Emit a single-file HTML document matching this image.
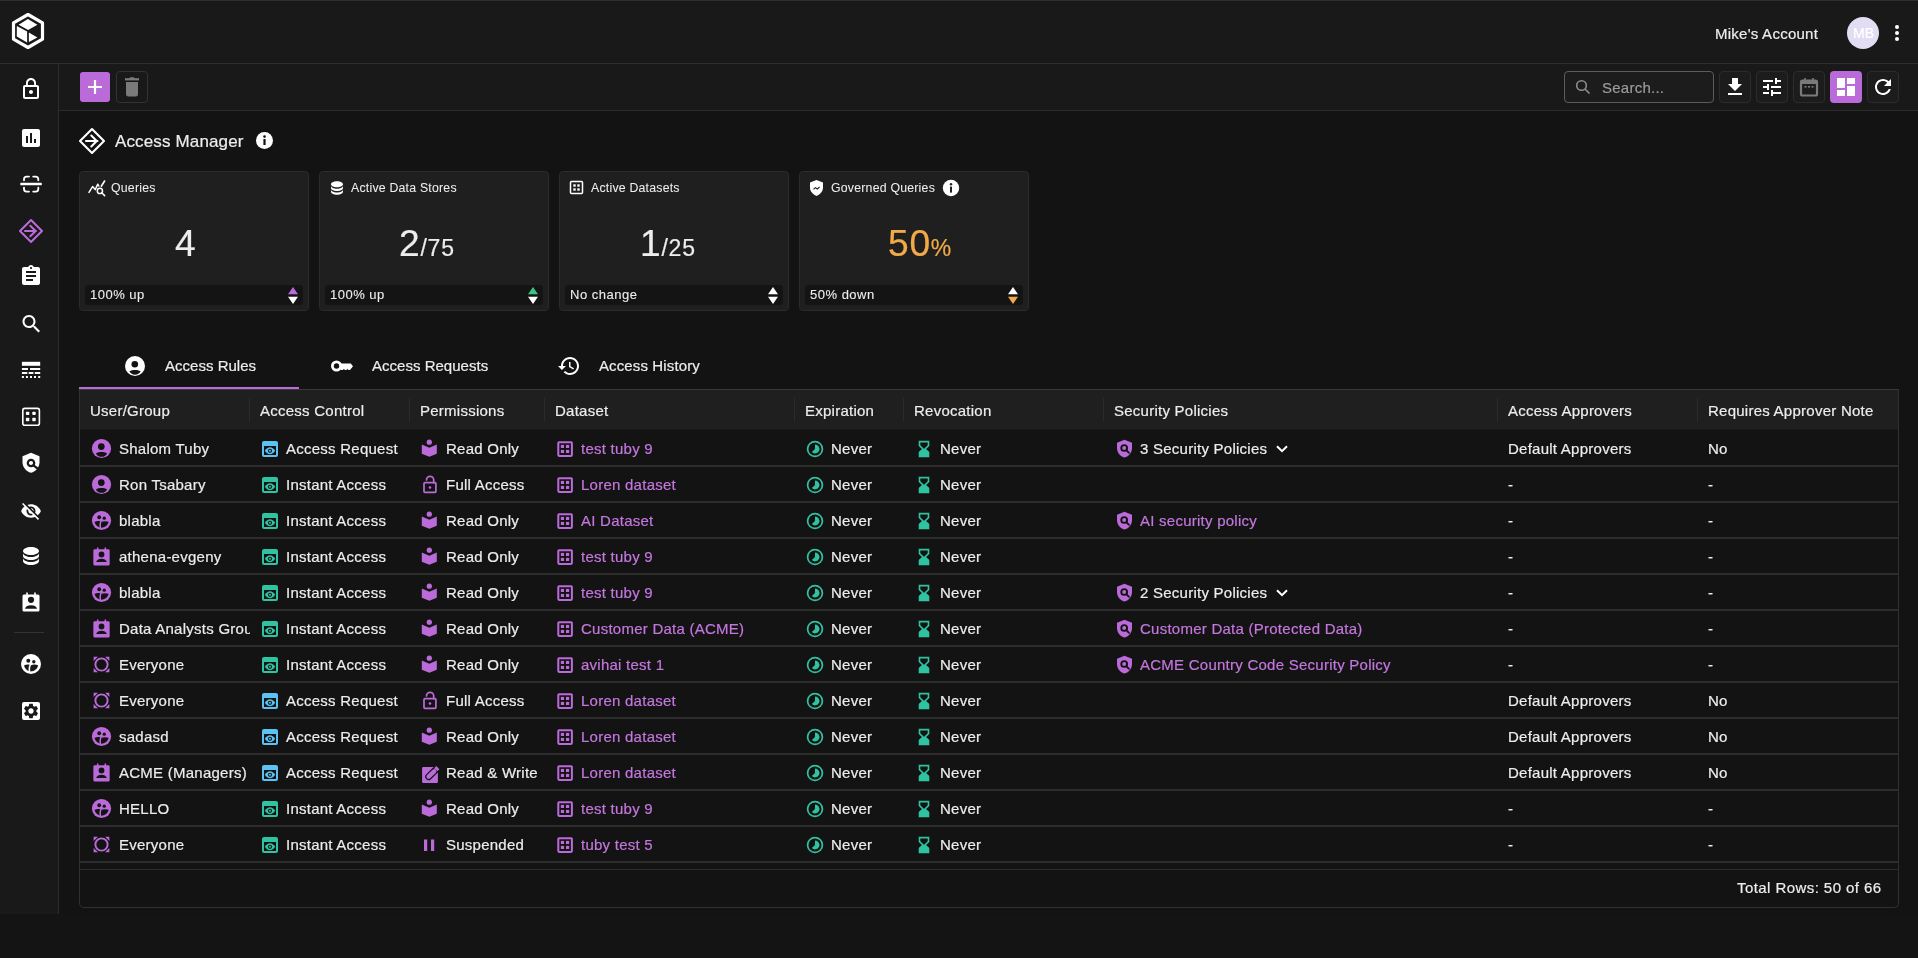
<!DOCTYPE html>
<html><head><meta charset="utf-8">
<style>
*{box-sizing:border-box;margin:0;padding:0}
html,body{width:1918px;height:958px;overflow:hidden;background:#141414;font-family:"Liberation Sans",sans-serif;color:#ececec}
.abs{position:absolute}
svg{display:block;overflow:visible}
#hdr{left:0;top:0;width:1918px;height:64px;background:#191919;border-top:1px solid #2e2e2e;border-bottom:1px solid #2e2e2e}
#side{left:0;top:64px;width:59px;height:850px;background:#191919;border-right:1px solid #2c2c2c}
#tb{left:59px;top:64px;width:1859px;height:47px;background:#191919;border-bottom:1px solid #2c2c2c}
#main{left:59px;top:111px;width:1859px;height:803px;background:#131313}
.t{position:absolute;white-space:nowrap;font-family:"Liberation Sans",sans-serif;-webkit-font-smoothing:antialiased;will-change:transform;-webkit-text-stroke:0.2px currentColor}
.card{position:absolute;top:171px;width:230px;height:140px;background:#1f1f1f;border:1px solid #2b2b2b;border-radius:4px}
</style></head><body>
<div id="hdr" class="abs"></div>
<svg class="abs" style="left:0px;top:0px" width="60" height="60" viewBox="0 0 60 60"><path d="M28 14.5 L42.5 22.8 V39.2 L28 47.5 L13.5 39.2 V22.8 Z" fill="none" stroke="#fff" stroke-width="3.2" stroke-linejoin="round"/><path d="M18.6 24.7 L27.9 18.9 L37.4 24.7 L28.1 30 Z" fill="#fff"/><path d="M16.8 25.9 L27.1 31.6 V42.4 L16.8 36.6 Z" fill="#fff"/><path d="M28.9 32.6 L37.4 37.4 L28.9 41.9 Z" fill="#fff"/></svg>
<div class="t" style="left:1715px;top:25.40px;font-size:15px;line-height:18px;letter-spacing:0.25px;color:#ededed">Mike's Account</div>
<div class="abs" style="left:1847px;top:17px;width:32px;height:32px;border-radius:50%;background:#e2ddf3"></div>
<div class="t" style="left:1853px;top:24.85px;font-size:14px;line-height:17px;letter-spacing:0.2px;color:#ffffff">MB</div>
<svg class="abs" style="left:1889px;top:21px" width="16" height="24" viewBox="0 0 16 24"><circle cx="8" cy="6" r="2" fill="#fff"/><circle cx="8" cy="12" r="2" fill="#fff"/><circle cx="8" cy="18" r="2" fill="#fff"/></svg>
<div id="side" class="abs"></div>
<svg class="abs" style="left:19px;top:77px" width="24" height="24" viewBox="0 0 24 24"><path fill="#fff" d="M12 17c1.1 0 2-.9 2-2s-.9-2-2-2-2 .9-2 2 .9 2 2 2zm6-9h-1V6c0-2.76-2.24-5-5-5S7 3.24 7 6v2H6c-1.1 0-2 .9-2 2v10c0 1.1.9 2 2 2h12c1.1 0 2-.9 2-2V10c0-1.1-.9-2-2-2zM8.9 6c0-1.71 1.39-3.1 3.1-3.1s3.1 1.39 3.1 3.1v2H8.9V6zM18 20H6V10h12v10z"/></svg>
<svg class="abs" style="left:19px;top:126px" width="24" height="24" viewBox="0 0 24 24"><path fill="#fff" d="M19 3H5c-1.1 0-2 .9-2 2v14c0 1.1.9 2 2 2h14c1.1 0 2-.9 2-2V5c0-1.1-.9-2-2-2zM9 17H7v-7h2v7zm4 0h-2V7h2v10zm4 0h-2v-4h2v4z"/></svg>
<svg class="abs" style="left:19px;top:172px" width="24" height="24" viewBox="0 0 24 24"><g fill="none" stroke="#fff" stroke-width="1.8" stroke-linecap="round"><path d="M5 8.3V7.2Q5 4.6 7.6 4.6H10M14.2 4.6H16.6Q19.3 4.6 19.3 7.2V8.3M5 15.6V17Q5 19.6 7.6 19.6H10M14.2 19.6H16.6Q19.3 19.6 19.3 17V15.6"/></g><rect x="1.3" y="10.8" width="21.5" height="2.5" rx="0.6" fill="#fff"/></svg>
<svg class="abs" style="left:19px;top:219px" width="24" height="24" viewBox="0 0 24 24"><g fill="none" stroke="#bb6bd9" stroke-width="2"><path d="M12 1 L23 12 L12 23 L1 12 Z" stroke-linejoin="round"/><path d="M6 12h11M11.3 6.7 L16.6 12 L11.3 17.3" stroke-linecap="round" stroke-linejoin="round"/></g></svg>
<svg class="abs" style="left:19px;top:264px" width="24" height="24" viewBox="0 0 24 24"><path fill="#fff" d="M19 3h-4.18C14.4 1.84 13.3 1 12 1c-1.3 0-2.4.84-2.82 2H5c-1.1 0-2 .9-2 2v14c0 1.1.9 2 2 2h14c1.1 0 2-.9 2-2V5c0-1.1-.9-2-2-2zm-7 0c.55 0 1 .45 1 1s-.45 1-1 1-1-.45-1-1 .45-1 1-1zm2 14H7v-2h7v2zm3-4H7v-2h10v2zm0-4H7V7h10v2z"/></svg>
<svg class="abs" style="left:19px;top:311px" width="24" height="24" viewBox="0 0 24 24"><path fill="#fff" d="M15.5 14h-.79l-.28-.27C15.41 12.59 16 11.11 16 9.5 16 5.91 13.09 3 9.5 3S3 5.91 3 9.5 5.91 16 9.5 16c1.61 0 3.09-.59 4.23-1.57l.27.28v.79l5 4.99L20.49 19l-4.99-5zm-6 0C7.01 14 5 11.99 5 9.5S7.01 5 9.5 5 14 7.01 14 9.5 11.99 14 9.5 14z" transform="translate(0.5,1)"/></svg>
<svg class="abs" style="left:19px;top:358px" width="24" height="24" viewBox="0 0 24 24"><g fill="#fff"><rect x="2.9" y="3.8" width="18.3" height="4"/><rect x="2.9" y="10" width="6.1" height="2"/><rect x="11" y="10" width="10.2" height="2"/><rect x="2.9" y="14" width="5.4" height="2"/><rect x="9.7" y="14" width="4.7" height="2"/><rect x="15.8" y="14" width="5.4" height="2"/><rect x="2.9" y="18" width="2" height="2"/><rect x="6.9" y="18" width="2" height="2"/><rect x="11" y="18" width="2" height="2"/><rect x="15" y="18" width="2" height="2"/><rect x="19.2" y="18" width="2" height="2"/></g></svg>
<svg class="abs" style="left:19px;top:405px" width="24" height="24" viewBox="0 0 24 24"><rect x="3.8" y="3.4" width="16.6" height="16.8" rx="2" fill="none" stroke="#fff" stroke-width="1.6"/><g fill="#fff"><rect x="6.9" y="6.7" width="3.4" height="3.4" rx="0.8"/><rect x="13.3" y="6.7" width="3.4" height="3.4" rx="0.8"/><rect x="6.9" y="12.8" width="3.4" height="3.4" rx="0.8"/><rect x="13.3" y="12.8" width="3.4" height="3.4" rx="0.8"/></g></svg>
<svg class="abs" style="left:19px;top:451px" width="24" height="24" viewBox="0 0 24 24"><path fill="#fff" d="M12 1.7 L20.5 5.3 V11 C20.5 16.2 16.9 20.5 12 21.8 C7.1 20.5 3.5 16.2 3.5 11 V5.3 Z"/><circle cx="12" cy="12" r="3.2" fill="none" stroke="#191919" stroke-width="2.2"/><path d="M14.4 14.4 L18.8 17.6" stroke="#191919" stroke-width="2.4" stroke-linecap="round"/></svg>
<svg class="abs" style="left:19px;top:499px" width="24" height="24" viewBox="0 0 24 24"><path transform="translate(12 12) scale(0.9) translate(-12 -12)" fill="#fff" d="M12 7c2.76 0 5 2.24 5 5 0 .65-.13 1.26-.36 1.83l2.92 2.92c1.51-1.26 2.7-2.89 3.43-4.75-1.73-4.39-6-7.5-11-7.5-1.4 0-2.74.25-3.98.7l2.16 2.16C10.74 7.13 11.35 7 12 7zM2 4.27l2.28 2.28.46.46C3.08 8.3 1.78 10.02 1 12c1.73 4.39 6 7.5 11 7.5 1.55 0 3.03-.3 4.38-.84l.42.42L19.73 22 21 20.73 3.27 3 2 4.27zM7.53 9.8l1.55 1.55c-.05.21-.08.43-.08.65 0 1.66 1.34 3 3 3 .22 0 .44-.03.65-.08l1.55 1.55c-.67.33-1.41.53-2.2.53-2.76 0-5-2.24-5-5 0-.79.2-1.53.53-2.2zm4.31-.78l3.15 3.15.02-.16c0-1.66-1.34-3-3-3l-.17.01z"/></svg>
<svg class="abs" style="left:19px;top:544px" width="24" height="24" viewBox="0 0 24 24"><path fill="#fff" d="M12,3C7.58,3 4,4.79 4,7C4,9.21 7.58,11 12,11C16.42,11 20,9.21 20,7C20,4.79 16.42,3 12,3M4,9V12C4,14.21 7.58,16 12,16C16.42,16 20,14.21 20,12V9C20,11.21 16.42,13 12,13C7.58,13 4,11.21 4,9M4,14V17C4,19.21 7.58,21 12,21C16.42,21 20,19.21 20,17V14C20,16.21 16.42,18 12,18C7.58,18 4,16.21 4,14Z"/></svg>
<svg class="abs" style="left:19px;top:590px" width="24" height="24" viewBox="0 0 24 24"><path fill="#fff" d="M5 4.5 h2.2 v-2 h1.6 v2 h6.4 v-2 h1.6 v2 H19 a1.5 1.5 0 0 1 1.5 1.5 V20 a1.5 1.5 0 0 1-1.5 1.5 H5 A1.5 1.5 0 0 1 3.5 20 V6 A1.5 1.5 0 0 1 5 4.5Z"/><circle cx="12" cy="9.8" r="3.1" fill="#191919"/><path d="M5.9 18.7 C6.5 16.3 9 15.2 12 15.2 C15 15.2 17.5 16.3 18.1 18.7 Z" fill="#191919"/></svg>
<svg class="abs" style="left:19px;top:652px" width="24" height="24" viewBox="0 0 24 24"><circle cx="12" cy="12" r="10" fill="#fff"/><circle cx="9.3" cy="8.8" r="2" fill="#191919"/><circle cx="14.8" cy="9.8" r="1.7" fill="#191919"/><path d="M5 13.5 C6.5 12.6 8.5 12.3 10.6 12.8 C9.6 14.4 9.4 16.5 9.7 19 C7.5 18.2 5.8 16.2 5 13.5Z M11.9 13.2 C14 12.4 17 12.4 19.1 13.2 C18.5 16.6 16 19.3 11.3 19.4 C11 17.2 11.1 15 11.9 13.2Z" fill="#191919"/></svg>
<svg class="abs" style="left:19px;top:699px" width="24" height="24" viewBox="0 0 24 24"><rect x="3" y="3" width="18" height="18" rx="2" fill="#fff"/><g transform="translate(3,3) scale(0.75)"><path fill="#191919" d="M19.14 12.94c.04-.3.06-.61.06-.94 0-.32-.02-.64-.07-.94l2.03-1.58c.18-.14.23-.41.12-.61l-1.92-3.32c-.12-.22-.37-.29-.59-.22l-2.39.96c-.5-.38-1.03-.7-1.62-.94l-.36-2.54c-.04-.24-.24-.41-.48-.41h-3.84c-.24 0-.43.17-.47.41l-.36 2.54c-.59.24-1.13.57-1.62.94l-2.39-.96c-.22-.08-.47 0-.59.22L2.74 8.87c-.12.21-.08.47.12.61l2.03 1.58c-.05.3-.09.63-.09.94s.02.64.07.94l-2.03 1.58c-.18.14-.23.41-.12.61l1.92 3.32c.12.22.37.29.59.22l2.39-.96c.5.38 1.03.7 1.62.94l.36 2.54c.05.24.24.41.48.41h3.84c.24 0 .44-.17.47-.41l.36-2.54c.59-.24 1.13-.56 1.62-.94l2.39.96c.22.08.47 0 .59-.22l1.92-3.32c.12-.22.07-.47-.12-.61l-2.01-1.58zM12 15.6c-1.98 0-3.6-1.62-3.6-3.6s1.62-3.6 3.6-3.6 3.6 1.62 3.6 3.6-1.62 3.6-3.6 3.6z"/></g></svg>
<div class="abs" style="left:14px;top:632px;width:30px;height:1px;background:#333"></div>
<div id="tb" class="abs"></div>
<div id="main" class="abs"></div>
<div class="abs" style="left:80px;top:72px;width:30px;height:30px;border-radius:3px;background:#bb6bd9"></div>
<svg class="abs" style="left:80px;top:72px" width="30" height="30" viewBox="0 0 30 30"><path d="M15 8v14M8 15h14" stroke="#fff" stroke-width="2.2"/></svg>
<div class="abs" style="left:116px;top:71px;width:32px;height:32px;border-radius:4px;border:1px solid #333"></div>
<svg class="abs" style="left:116px;top:71px" width="32" height="32" viewBox="0 0 32 32"><path fill="#7a7a7a" d="M10 11h12v12a2.5 2.5 0 0 1-2.5 2.5h-7A2.5 2.5 0 0 1 10 23z"/><rect x="9" y="7.2" width="14" height="2.2" fill="#7a7a7a"/><rect x="13.5" y="6.2" width="5" height="2" rx="1" fill="#7a7a7a"/></svg>
<div class="abs" style="left:1564px;top:71px;width:150px;height:32px;border-radius:4px;border:1px solid #5c5c5c;background:#1c1c1c"></div>
<svg class="abs" style="left:1574px;top:78px" width="18" height="18" viewBox="0 0 18 18"><circle cx="7.5" cy="7.5" r="4.8" fill="none" stroke="#8c8c8c" stroke-width="1.6"/><path d="M11 11l4.5 4.5" stroke="#8c8c8c" stroke-width="1.7"/></svg>
<div class="t" style="left:1602px;top:79.10px;font-size:15px;line-height:18px;letter-spacing:0.25px;color:#9b9b9b">Search...</div>
<div class="abs" style="left:1719px;top:71px;width:32px;height:32px;border-radius:4px;border:1px solid #2c2c2c;background:#1c1c1c"></div>
<svg class="abs" style="left:1723px;top:75px" width="24" height="24" viewBox="0 0 24 24"><path fill="#fff" d="M19 9h-4V3H9v6H5l7 7 7-7zM5 18v2h14v-2H5z"/></svg>
<div class="abs" style="left:1756px;top:71px;width:32px;height:32px;border-radius:4px;border:1px solid #2c2c2c;background:#1c1c1c"></div>
<svg class="abs" style="left:1760px;top:75px" width="24" height="24" viewBox="0 0 24 24"><path fill="#fff" d="M3 17v2h6v-2H3zM3 5v2h10V5H3zm10 16v-2h8v-2h-8v-2h-2v6h2zM7 9v2H3v2h4v2h2V9H7zm14 4v-2H11v2h10zm-6-4h2V7h4V5h-4V3h-2v6z"/></svg>
<div class="abs" style="left:1793px;top:71px;width:32px;height:32px;border-radius:4px;border:1px solid #2c2c2c;background:#1c1c1c"></div>
<svg class="abs" style="left:1797px;top:75px" width="24" height="24" viewBox="0 0 24 24"><path fill="none" stroke="#7a7a7a" stroke-width="2.2" d="M5.5 5.5h13a1.5 1.5 0 0 1 1.5 1.5v12a1.5 1.5 0 0 1-1.5 1.5h-13A1.5 1.5 0 0 1 4 19V7a1.5 1.5 0 0 1 1.5-1.5z"/><rect x="4" y="5" width="16" height="4" fill="#7a7a7a"/><path d="M8 3v3M16 3v3" stroke="#7a7a7a" stroke-width="1.6"/><rect x="7.5" y="11" width="2" height="1.6" fill="#7a7a7a"/><rect x="11" y="11" width="2" height="1.6" fill="#7a7a7a"/><rect x="14.5" y="11" width="2" height="1.6" fill="#7a7a7a"/></svg>
<div class="abs" style="left:1830px;top:71px;width:32px;height:32px;border-radius:4px;background:#bb6bd9"></div>
<svg class="abs" style="left:1834px;top:75px" width="24" height="24" viewBox="0 0 24 24"><path fill="#fff" d="M3 13h8V3H3v10zm0 8h8v-6H3v6zm10 0h8V11h-8v10zm0-18v6h8V3h-8z"/></svg>
<div class="abs" style="left:1867px;top:71px;width:32px;height:32px;border-radius:4px;border:1px solid #2c2c2c;background:#1c1c1c"></div>
<svg class="abs" style="left:1871px;top:75px" width="24" height="24" viewBox="0 0 24 24"><path fill="#fff" d="M17.65 6.35C16.2 4.9 14.21 4 12 4c-4.42 0-7.99 3.58-7.99 8s3.57 8 7.99 8c3.73 0 6.84-2.55 7.73-6h-2.08c-.82 2.33-3.04 4-5.65 4-3.31 0-6-2.69-6-6s2.69-6 6-6c1.66 0 3.14.69 4.22 1.78L13 11h7V4l-2.35 2.35z"/></svg>
<svg class="abs" style="left:77px;top:126px" width="30" height="30" viewBox="0 0 30 30"><path d="M15 3 L27 15 L15 27 L3 15 Z" fill="none" stroke="#fff" stroke-width="2.1" stroke-linejoin="round"/><path d="M9 15h11.5M14.3 9.6 L19.7 15 L14.3 20.4" fill="none" stroke="#fff" stroke-width="2.1" stroke-linecap="round" stroke-linejoin="round"/></svg>
<div class="t" style="left:115px;top:132.11px;font-size:17px;line-height:20px;letter-spacing:0.14px;color:#ededed">Access Manager</div>
<svg class="abs" style="left:255px;top:131px" width="19" height="19" viewBox="0 0 19 19"><circle cx="9.5" cy="9.5" r="8.5" fill="#fff"/><rect x="8.4" y="8" width="2.2" height="6" fill="#131313"/><circle cx="9.5" cy="5.6" r="1.3" fill="#131313"/></svg>
<div class="card" style="left:79px"></div>
<svg class="abs" style="left:88px;top:179px" width="18" height="18" viewBox="0 0 18 18"><path d="M1 13.4 L4.6 7.6 L7.2 10.6 L9.8 5.2 L10.8 7" fill="none" stroke="#fff" stroke-width="1.5" stroke-linejoin="round" stroke-linecap="round"/><path d="M13.3 7.2 L16.6 2" stroke="#fff" stroke-width="1.6" stroke-linecap="round"/><circle cx="11.9" cy="11.9" r="2.6" fill="none" stroke="#fff" stroke-width="1.5"/><path d="M13.8 13.8 L16.6 16.6" stroke="#fff" stroke-width="1.6" stroke-linecap="round"/></svg>
<div class="t" style="left:111px;top:180.54px;font-size:12.3px;line-height:15px;letter-spacing:0.22px;color:#ededed;-webkit-text-stroke:0.05px currentColor">Queries</div>
<div class="abs" style="left:85px;top:285px;width:218px;height:20px;background:#141414;border-radius:3px"></div>
<div class="t" style="left:90px;top:286.80px;font-size:13px;line-height:16px;letter-spacing:0.5px;color:#ededed;-webkit-text-stroke:0.1px currentColor">100% up</div>
<svg class="abs" style="left:287px;top:286px" width="12" height="19" viewBox="0 0 12 19"><path d="M6 1 L11 8.3 H1 Z" fill="#bb6bd9"/><path d="M6 18 L11 10.7 H1 Z" fill="#fff"/></svg>
<div class="card" style="left:319px"></div>
<svg class="abs" style="left:328px;top:179px" width="18" height="18" viewBox="0 0 18 18"><g transform="scale(0.75)"><path fill="#fff" d="M12,3C7.58,3 4,4.79 4,7C4,9.21 7.58,11 12,11C16.42,11 20,9.21 20,7C20,4.79 16.42,3 12,3M4,9V12C4,14.21 7.58,16 12,16C16.42,16 20,14.21 20,12V9C20,11.21 16.42,13 12,13C7.58,13 4,11.21 4,9M4,14V17C4,19.21 7.58,21 12,21C16.42,21 20,19.21 20,17V14C20,16.21 16.42,18 12,18C7.58,18 4,16.21 4,14Z"/></g></svg>
<div class="t" style="left:351px;top:180.54px;font-size:12.3px;line-height:15px;letter-spacing:0.22px;color:#ededed;-webkit-text-stroke:0.05px currentColor">Active Data Stores</div>
<div class="abs" style="left:325px;top:285px;width:218px;height:20px;background:#141414;border-radius:3px"></div>
<div class="t" style="left:330px;top:286.80px;font-size:13px;line-height:16px;letter-spacing:0.5px;color:#ededed;-webkit-text-stroke:0.1px currentColor">100% up</div>
<svg class="abs" style="left:527px;top:286px" width="12" height="19" viewBox="0 0 12 19"><path d="M6 1 L11 8.3 H1 Z" fill="#3ac48a"/><path d="M6 18 L11 10.7 H1 Z" fill="#fff"/></svg>
<div class="card" style="left:559px"></div>
<svg class="abs" style="left:568px;top:179px" width="18" height="18" viewBox="0 0 18 18"><rect x="2.5" y="2.5" width="12" height="12" rx="1" fill="none" stroke="#fff" stroke-width="1.5"/><rect x="5.3" y="5.3" width="2.4" height="2.4" fill="#fff"/><rect x="9.3" y="5.3" width="2.4" height="2.4" fill="#fff"/><rect x="5.3" y="9.3" width="2.4" height="2.4" fill="#fff"/><rect x="9.3" y="9.3" width="2.4" height="2.4" fill="#fff"/></svg>
<div class="t" style="left:591px;top:180.54px;font-size:12.3px;line-height:15px;letter-spacing:0.22px;color:#ededed;-webkit-text-stroke:0.05px currentColor">Active Datasets</div>
<div class="abs" style="left:565px;top:285px;width:218px;height:20px;background:#141414;border-radius:3px"></div>
<div class="t" style="left:570px;top:286.80px;font-size:13px;line-height:16px;letter-spacing:0.5px;color:#ededed;-webkit-text-stroke:0.1px currentColor">No change</div>
<svg class="abs" style="left:767px;top:286px" width="12" height="19" viewBox="0 0 12 19"><path d="M6 1 L11 8.3 H1 Z" fill="#fff"/><path d="M6 18 L11 10.7 H1 Z" fill="#fff"/></svg>
<div class="card" style="left:799px"></div>
<svg class="abs" style="left:808px;top:179px" width="18" height="18" viewBox="0 0 18 18"><path fill="#fff" d="M8.5 1 L15 3.6 V8.5 C15 12.3 12.3 15.3 8.5 17 C4.7 15.3 2 12.3 2 8.5 V3.6 Z"/><path d="M5.5 10.3 L7.3 8.6 L9.3 10 L11.5 8" fill="none" stroke="#1f1f1f" stroke-width="1.1"/></svg>
<div class="t" style="left:831px;top:180.54px;font-size:12.3px;line-height:15px;letter-spacing:0.22px;color:#ededed;-webkit-text-stroke:0.05px currentColor">Governed Queries</div>
<div class="abs" style="left:805px;top:285px;width:218px;height:20px;background:#141414;border-radius:3px"></div>
<div class="t" style="left:810px;top:286.80px;font-size:13px;line-height:16px;letter-spacing:0.5px;color:#ededed;-webkit-text-stroke:0.1px currentColor">50% down</div>
<svg class="abs" style="left:1007px;top:286px" width="12" height="19" viewBox="0 0 12 19"><path d="M6 1 L11 8.3 H1 Z" fill="#fff"/><path d="M6 18 L11 10.7 H1 Z" fill="#f2aa48"/></svg>
<div class="t" style="left:175px;top:221.21px;font-size:37.2px;line-height:45px;letter-spacing:0.7px;color:#ededed">4</div>
<div class="t" style="left:398.6px;top:221.21px;font-size:37.2px;line-height:45px;letter-spacing:0.7px;color:#ededed">2<span style="font-size:23px;letter-spacing:0.8px">/75</span></div>
<div class="t" style="left:639.7px;top:221.21px;font-size:37.2px;line-height:45px;letter-spacing:0.7px;color:#ededed">1<span style="font-size:23px;letter-spacing:0.8px">/25</span></div>
<div class="t" style="left:887.5px;top:221.21px;font-size:37.2px;line-height:45px;letter-spacing:0.7px;color:#f2aa48">50<span style="font-size:23px;letter-spacing:0.8px">%</span></div>
<svg class="abs" style="left:942px;top:179px" width="18" height="18" viewBox="0 0 18 18"><circle cx="9" cy="9" r="8.2" fill="#fff"/><rect x="8" y="7.6" width="2" height="6" fill="#1f1f1f"/><circle cx="9" cy="5.3" r="1.2" fill="#1f1f1f"/></svg>
<svg class="abs" style="left:123px;top:354px" width="24" height="24" viewBox="0 0 24 24"><circle cx="12" cy="12" r="10" fill="#fff"/><circle cx="11.8" cy="10.2" r="3.3" fill="#131313"/><path d="M6.4 17.3 C8 16.3 10 15.9 12 15.9 C14 15.9 16 16.3 17.6 17.3 C16.6 19.5 14.4 20.7 12 20.7 C9.6 20.7 7.4 19.5 6.4 17.3Z" fill="#131313"/></svg>
<div class="t" style="left:165px;top:357.00px;font-size:15px;line-height:18px;letter-spacing:0.02px;color:#ededed">Access Rules</div>
<svg class="abs" style="left:325px;top:350px" width="35" height="32" viewBox="0 0 35 32"><path fill="#fff" fill-rule="evenodd" d="M11.5 10.5 A5.5 5.5 0 1 0 11.5 21.5 A5.5 5.5 0 1 0 11.5 10.5Z M11.5 13.3 A2.7 2.7 0 1 1 11.5 18.7 A2.7 2.7 0 1 1 11.5 13.3Z"/><path fill="#fff" d="M15.5 13.4 H25.8 L28 16.2 L25 19.9 H23.6 L22.5 18.9 L21.4 19.9 H20 L18.9 18.9 L17.8 19.9 H15.5 Z"/></svg>
<div class="t" style="left:372px;top:357.00px;font-size:15px;line-height:18px;letter-spacing:0.02px;color:#ededed">Access Requests</div>
<svg class="abs" style="left:557px;top:354px" width="24" height="24" viewBox="0 0 24 24"><path fill="#fff" d="M13 3c-4.97 0-9 4.03-9 9H1l3.89 3.89.07.14L9 12H6c0-3.87 3.13-7 7-7s7 3.13 7 7-3.13 7-7 7c-1.93 0-3.68-.79-4.94-2.06l-1.42 1.42C8.27 19.99 10.51 21 13 21c4.97 0 9-4.03 9-9s-4.03-9-9-9zm-1 5v5l4.28 2.54.72-1.21-3.5-2.08V8H12z"/></svg>
<div class="t" style="left:599px;top:357.00px;font-size:15px;line-height:18px;letter-spacing:0.12px;color:#ededed">Access History</div>
<div class="abs" style="left:79px;top:389px;width:1820px;height:1px;background:#3a3a3a"></div>
<div class="abs" style="left:79px;top:387px;width:220px;height:2px;background:#bb6bd9"></div>
<div class="abs" style="left:79px;top:390px;width:1820px;height:518px;border:1px solid #303030;border-top:none;border-radius:0 0 5px 5px;background:#131313"></div>
<div class="abs" style="left:80px;top:390px;width:1818px;height:39px;background:#1f1f1f"></div>
<div class="abs" style="left:80px;top:429px;width:1818px;height:1px;background:#181818"></div>
<div class="t" style="left:90px;top:402.40px;font-size:15px;line-height:18px;letter-spacing:0.25px;color:#ededed">User/Group</div>
<div class="t" style="left:260px;top:402.40px;font-size:15px;line-height:18px;letter-spacing:0.25px;color:#ededed">Access Control</div>
<div class="t" style="left:420px;top:402.40px;font-size:15px;line-height:18px;letter-spacing:0.25px;color:#ededed">Permissions</div>
<div class="t" style="left:555px;top:402.40px;font-size:15px;line-height:18px;letter-spacing:0.25px;color:#ededed">Dataset</div>
<div class="t" style="left:805px;top:402.40px;font-size:15px;line-height:18px;letter-spacing:0.25px;color:#ededed">Expiration</div>
<div class="t" style="left:914px;top:402.40px;font-size:15px;line-height:18px;letter-spacing:0.25px;color:#ededed">Revocation</div>
<div class="t" style="left:1114px;top:402.40px;font-size:15px;line-height:18px;letter-spacing:0.25px;color:#ededed">Security Policies</div>
<div class="t" style="left:1508px;top:402.40px;font-size:15px;line-height:18px;letter-spacing:0.25px;color:#ededed">Access Approvers</div>
<div class="t" style="left:1708px;top:402.40px;font-size:15px;line-height:18px;letter-spacing:0.25px;color:#ededed">Requires Approver Note</div>
<div class="abs" style="left:249px;top:398px;width:1px;height:24px;background:#2a2a2a"></div>
<div class="abs" style="left:409px;top:398px;width:1px;height:24px;background:#2a2a2a"></div>
<div class="abs" style="left:544px;top:398px;width:1px;height:24px;background:#2a2a2a"></div>
<div class="abs" style="left:794px;top:398px;width:1px;height:24px;background:#2a2a2a"></div>
<div class="abs" style="left:903px;top:398px;width:1px;height:24px;background:#2a2a2a"></div>
<div class="abs" style="left:1103px;top:398px;width:1px;height:24px;background:#2a2a2a"></div>
<div class="abs" style="left:1497px;top:398px;width:1px;height:24px;background:#2a2a2a"></div>
<div class="abs" style="left:1697px;top:398px;width:1px;height:24px;background:#2a2a2a"></div>
<div class="abs" style="left:80px;top:465px;width:1818px;height:2px;background:#2c2c2c"></div>
<svg class="abs" style="left:90px;top:437px" width="23" height="23" viewBox="0 0 24 24"><circle cx="12" cy="12" r="10" fill="#bb6bd9"/><circle cx="11.8" cy="10" r="3.5" fill="#131313"/><path d="M6.2 17.1 C7.8 16 9.9 15.6 12 15.6 C14.1 15.6 16.2 16 17.8 17.1 C16.7 19.4 14.5 20.6 12 20.6 C9.5 20.6 7.3 19.4 6.2 17.1Z" fill="#131313"/></svg>
<div class="t" style="left:119px;top:439.90px;width:131px;overflow:hidden;font-size:15px;line-height:18px;letter-spacing:0.25px">Shalom Tuby</div>
<svg class="abs" style="left:262px;top:441px" width="16" height="16" viewBox="0 0 16 16"><rect x="1" y="1" width="14" height="14" rx="1" fill="none" stroke="#5bc2f3" stroke-width="2"/><rect x="1" y="1" width="14" height="4" fill="#5bc2f3"/><path d="M2.8 9.8 C4.2 7.5 6 6.3 8 6.3 C10 6.3 11.8 7.5 13.2 9.8 C11.8 12.1 10 13.3 8 13.3 C6 13.3 4.2 12.1 2.8 9.8Z" fill="#5bc2f3"/><circle cx="8" cy="9.8" r="2.1" fill="#131313"/><circle cx="8" cy="9.8" r="1" fill="#5bc2f3"/></svg>
<div class="t" style="left:286px;top:439.90px;font-size:15px;line-height:18px;letter-spacing:0.25px;color:#ededed">Access Request</div>
<svg class="abs" style="left:421px;top:439px" width="17" height="18" viewBox="0 0 17 18"><circle cx="8.3" cy="3.2" r="2.6" fill="#bb6bd9"/><path d="M0.8 5.6 L8.3 8.7 L15.8 5.6 V14.8 L8.3 17.8 L0.8 14.8 Z" fill="#bb6bd9"/></svg>
<div class="t" style="left:446px;top:439.90px;font-size:15px;line-height:18px;letter-spacing:0.25px;color:#ededed">Read Only</div>
<svg class="abs" style="left:557px;top:440px" width="17" height="18" viewBox="0 0 17 18"><rect x="1.3" y="2.2" width="13.6" height="13.7" rx="0.8" fill="none" stroke="#bb6bd9" stroke-width="2"/><rect x="3.85" y="4.9" width="3.2" height="3.1" fill="#bb6bd9"/><rect x="8.95" y="4.9" width="3.2" height="3.1" fill="#bb6bd9"/><rect x="3.85" y="9.9" width="3.2" height="3.1" fill="#bb6bd9"/><rect x="8.95" y="9.9" width="3.2" height="3.1" fill="#bb6bd9"/></svg>
<div class="t" style="left:581px;top:439.90px;font-size:15px;line-height:18px;letter-spacing:0.25px;color:#c477de">test tuby 9</div>
<svg class="abs" style="left:806px;top:440px" width="18" height="18" viewBox="0 0 18 18"><circle cx="9" cy="9" r="7.4" fill="none" stroke="#2fc3a2" stroke-width="1.7"/><path d="M9 4.6 A4.4 4.4 0 1 1 5.9 12.1 L9 9 Z" fill="#2fc3a2"/></svg>
<div class="t" style="left:831px;top:439.90px;font-size:15px;line-height:18px;letter-spacing:0.25px;color:#ededed">Never</div>
<svg class="abs" style="left:918px;top:440px" width="12" height="18" viewBox="0 0 12 18"><path d="M1.5 1.6 H10.5 V5.6 L7 9 L10.5 12.4 V16.4 H1.5 V12.4 L5 9 L1.5 5.6 Z" fill="none" stroke="#2fc3a2" stroke-width="1.6" stroke-linejoin="miter"/><path d="M1.5 16.4 V12.4 L6 8.6 L10.5 12.4 V16.4 Z" fill="#2fc3a2"/></svg>
<div class="t" style="left:940px;top:439.90px;font-size:15px;line-height:18px;letter-spacing:0.25px;color:#ededed">Never</div>
<svg class="abs" style="left:1116px;top:439px" width="17" height="19" viewBox="0 0 17 19"><path fill="#bb6bd9" d="M8.5 0.8 L16 3.8 V9 C16 13.6 12.9 17.3 8.5 18.5 C4.1 17.3 1 13.6 1 9 V3.8 Z"/><circle cx="8.2" cy="9" r="2.9" fill="none" stroke="#131313" stroke-width="1.9"/><path d="M10.3 11.1 L13 13.8" stroke="#131313" stroke-width="1.9" stroke-linecap="round"/></svg>
<div class="t" style="left:1140px;top:439.90px;font-size:15px;line-height:18px;letter-spacing:0.25px;color:#ededed">3 Security Policies</div>
<svg class="abs" style="left:1275px;top:444px" width="14" height="10" viewBox="0 0 14 10"><path d="M2 2.2 L7 7.2 L12 2.2" fill="none" stroke="#fff" stroke-width="2"/></svg>
<div class="t" style="left:1508px;top:439.90px;font-size:15px;line-height:18px;letter-spacing:0.25px;color:#ededed">Default Approvers</div>
<div class="t" style="left:1708px;top:439.90px;font-size:15px;line-height:18px;letter-spacing:0.25px;color:#ededed">No</div>
<div class="abs" style="left:80px;top:501px;width:1818px;height:2px;background:#2c2c2c"></div>
<svg class="abs" style="left:90px;top:473px" width="23" height="23" viewBox="0 0 24 24"><circle cx="12" cy="12" r="10" fill="#bb6bd9"/><circle cx="11.8" cy="10" r="3.5" fill="#131313"/><path d="M6.2 17.1 C7.8 16 9.9 15.6 12 15.6 C14.1 15.6 16.2 16 17.8 17.1 C16.7 19.4 14.5 20.6 12 20.6 C9.5 20.6 7.3 19.4 6.2 17.1Z" fill="#131313"/></svg>
<div class="t" style="left:119px;top:475.90px;width:131px;overflow:hidden;font-size:15px;line-height:18px;letter-spacing:0.25px">Ron Tsabary</div>
<svg class="abs" style="left:262px;top:477px" width="16" height="16" viewBox="0 0 16 16"><rect x="1" y="1" width="14" height="14" rx="1" fill="none" stroke="#2fc3a2" stroke-width="2"/><rect x="1" y="1" width="14" height="4" fill="#2fc3a2"/><path d="M2.8 9.8 C4.2 7.5 6 6.3 8 6.3 C10 6.3 11.8 7.5 13.2 9.8 C11.8 12.1 10 13.3 8 13.3 C6 13.3 4.2 12.1 2.8 9.8Z" fill="#2fc3a2"/><circle cx="8" cy="9.8" r="2.1" fill="#131313"/><circle cx="8" cy="9.8" r="1" fill="#2fc3a2"/></svg>
<div class="t" style="left:286px;top:475.90px;font-size:15px;line-height:18px;letter-spacing:0.25px;color:#ededed">Instant Access</div>
<svg class="abs" style="left:421px;top:475px" width="17" height="18" viewBox="0 0 17 18"><path d="M12.7 7.7 V4.9 A3.6 3.6 0 0 0 5.5 4.9" fill="none" stroke="#bb6bd9" stroke-width="1.7" stroke-linecap="round"/><rect x="3" y="7.7" width="11.9" height="9.6" rx="0.9" fill="none" stroke="#bb6bd9" stroke-width="1.7"/><circle cx="9" cy="12.5" r="1.3" fill="#bb6bd9"/></svg>
<div class="t" style="left:446px;top:475.90px;font-size:15px;line-height:18px;letter-spacing:0.25px;color:#ededed">Full Access</div>
<svg class="abs" style="left:557px;top:476px" width="17" height="18" viewBox="0 0 17 18"><rect x="1.3" y="2.2" width="13.6" height="13.7" rx="0.8" fill="none" stroke="#bb6bd9" stroke-width="2"/><rect x="3.85" y="4.9" width="3.2" height="3.1" fill="#bb6bd9"/><rect x="8.95" y="4.9" width="3.2" height="3.1" fill="#bb6bd9"/><rect x="3.85" y="9.9" width="3.2" height="3.1" fill="#bb6bd9"/><rect x="8.95" y="9.9" width="3.2" height="3.1" fill="#bb6bd9"/></svg>
<div class="t" style="left:581px;top:475.90px;font-size:15px;line-height:18px;letter-spacing:0.25px;color:#c477de">Loren dataset</div>
<svg class="abs" style="left:806px;top:476px" width="18" height="18" viewBox="0 0 18 18"><circle cx="9" cy="9" r="7.4" fill="none" stroke="#2fc3a2" stroke-width="1.7"/><path d="M9 4.6 A4.4 4.4 0 1 1 5.9 12.1 L9 9 Z" fill="#2fc3a2"/></svg>
<div class="t" style="left:831px;top:475.90px;font-size:15px;line-height:18px;letter-spacing:0.25px;color:#ededed">Never</div>
<svg class="abs" style="left:918px;top:476px" width="12" height="18" viewBox="0 0 12 18"><path d="M1.5 1.6 H10.5 V5.6 L7 9 L10.5 12.4 V16.4 H1.5 V12.4 L5 9 L1.5 5.6 Z" fill="none" stroke="#2fc3a2" stroke-width="1.6" stroke-linejoin="miter"/><path d="M1.5 16.4 V12.4 L6 8.6 L10.5 12.4 V16.4 Z" fill="#2fc3a2"/></svg>
<div class="t" style="left:940px;top:475.90px;font-size:15px;line-height:18px;letter-spacing:0.25px;color:#ededed">Never</div>
<div class="t" style="left:1508px;top:475.90px;font-size:15px;line-height:18px;letter-spacing:0.25px;color:#ededed">-</div>
<div class="t" style="left:1708px;top:475.90px;font-size:15px;line-height:18px;letter-spacing:0.25px;color:#ededed">-</div>
<div class="abs" style="left:80px;top:537px;width:1818px;height:2px;background:#2c2c2c"></div>
<svg class="abs" style="left:90px;top:509px" width="23" height="23" viewBox="0 0 24 24"><circle cx="12" cy="12" r="10" fill="#bb6bd9"/><circle cx="9.6" cy="8.6" r="2" fill="#131313"/><circle cx="14.9" cy="9.6" r="1.7" fill="#131313"/><path d="M4.7 13.6 C6.4 12.7 8.5 12.3 10.8 12.8 C9.8 14.5 9.6 16.6 10 19.2 C7.6 18.5 5.6 16.4 4.7 13.6Z M12.1 13.3 C14.2 12.5 17.3 12.5 19.4 13.3 C18.8 16.8 16 19.3 11.6 19.5 C11.3 17.3 11.3 15.1 12.1 13.3Z" fill="#131313"/></svg>
<div class="t" style="left:119px;top:511.90px;width:131px;overflow:hidden;font-size:15px;line-height:18px;letter-spacing:0.25px">blabla</div>
<svg class="abs" style="left:262px;top:513px" width="16" height="16" viewBox="0 0 16 16"><rect x="1" y="1" width="14" height="14" rx="1" fill="none" stroke="#2fc3a2" stroke-width="2"/><rect x="1" y="1" width="14" height="4" fill="#2fc3a2"/><path d="M2.8 9.8 C4.2 7.5 6 6.3 8 6.3 C10 6.3 11.8 7.5 13.2 9.8 C11.8 12.1 10 13.3 8 13.3 C6 13.3 4.2 12.1 2.8 9.8Z" fill="#2fc3a2"/><circle cx="8" cy="9.8" r="2.1" fill="#131313"/><circle cx="8" cy="9.8" r="1" fill="#2fc3a2"/></svg>
<div class="t" style="left:286px;top:511.90px;font-size:15px;line-height:18px;letter-spacing:0.25px;color:#ededed">Instant Access</div>
<svg class="abs" style="left:421px;top:511px" width="17" height="18" viewBox="0 0 17 18"><circle cx="8.3" cy="3.2" r="2.6" fill="#bb6bd9"/><path d="M0.8 5.6 L8.3 8.7 L15.8 5.6 V14.8 L8.3 17.8 L0.8 14.8 Z" fill="#bb6bd9"/></svg>
<div class="t" style="left:446px;top:511.90px;font-size:15px;line-height:18px;letter-spacing:0.25px;color:#ededed">Read Only</div>
<svg class="abs" style="left:557px;top:512px" width="17" height="18" viewBox="0 0 17 18"><rect x="1.3" y="2.2" width="13.6" height="13.7" rx="0.8" fill="none" stroke="#bb6bd9" stroke-width="2"/><rect x="3.85" y="4.9" width="3.2" height="3.1" fill="#bb6bd9"/><rect x="8.95" y="4.9" width="3.2" height="3.1" fill="#bb6bd9"/><rect x="3.85" y="9.9" width="3.2" height="3.1" fill="#bb6bd9"/><rect x="8.95" y="9.9" width="3.2" height="3.1" fill="#bb6bd9"/></svg>
<div class="t" style="left:581px;top:511.90px;font-size:15px;line-height:18px;letter-spacing:0.25px;color:#c477de">AI Dataset</div>
<svg class="abs" style="left:806px;top:512px" width="18" height="18" viewBox="0 0 18 18"><circle cx="9" cy="9" r="7.4" fill="none" stroke="#2fc3a2" stroke-width="1.7"/><path d="M9 4.6 A4.4 4.4 0 1 1 5.9 12.1 L9 9 Z" fill="#2fc3a2"/></svg>
<div class="t" style="left:831px;top:511.90px;font-size:15px;line-height:18px;letter-spacing:0.25px;color:#ededed">Never</div>
<svg class="abs" style="left:918px;top:512px" width="12" height="18" viewBox="0 0 12 18"><path d="M1.5 1.6 H10.5 V5.6 L7 9 L10.5 12.4 V16.4 H1.5 V12.4 L5 9 L1.5 5.6 Z" fill="none" stroke="#2fc3a2" stroke-width="1.6" stroke-linejoin="miter"/><path d="M1.5 16.4 V12.4 L6 8.6 L10.5 12.4 V16.4 Z" fill="#2fc3a2"/></svg>
<div class="t" style="left:940px;top:511.90px;font-size:15px;line-height:18px;letter-spacing:0.25px;color:#ededed">Never</div>
<svg class="abs" style="left:1116px;top:511px" width="17" height="19" viewBox="0 0 17 19"><path fill="#bb6bd9" d="M8.5 0.8 L16 3.8 V9 C16 13.6 12.9 17.3 8.5 18.5 C4.1 17.3 1 13.6 1 9 V3.8 Z"/><circle cx="8.2" cy="9" r="2.9" fill="none" stroke="#131313" stroke-width="1.9"/><path d="M10.3 11.1 L13 13.8" stroke="#131313" stroke-width="1.9" stroke-linecap="round"/></svg>
<div class="t" style="left:1140px;top:511.90px;font-size:15px;line-height:18px;letter-spacing:0.25px;color:#c477de">AI security policy</div>
<div class="t" style="left:1508px;top:511.90px;font-size:15px;line-height:18px;letter-spacing:0.25px;color:#ededed">-</div>
<div class="t" style="left:1708px;top:511.90px;font-size:15px;line-height:18px;letter-spacing:0.25px;color:#ededed">-</div>
<div class="abs" style="left:80px;top:573px;width:1818px;height:2px;background:#2c2c2c"></div>
<svg class="abs" style="left:90px;top:545px" width="23" height="23" viewBox="0 0 24 24"><path fill="#bb6bd9" d="M5 4.5 h2.2 v-2 h1.6 v2 h6.4 v-2 h1.6 v2 H19 a1.5 1.5 0 0 1 1.5 1.5 V20 a1.5 1.5 0 0 1-1.5 1.5 H5 A1.5 1.5 0 0 1 3.5 20 V6 A1.5 1.5 0 0 1 5 4.5Z"/><circle cx="12" cy="9.8" r="3" fill="#131313"/><path d="M6.3 17.8 C7.1 15.5 9.5 14.3 12 14.3 C14.5 14.3 16.9 15.5 17.7 17.8 Z" fill="#131313"/></svg>
<div class="t" style="left:119px;top:547.90px;width:131px;overflow:hidden;font-size:15px;line-height:18px;letter-spacing:0.25px">athena-evgeny</div>
<svg class="abs" style="left:262px;top:549px" width="16" height="16" viewBox="0 0 16 16"><rect x="1" y="1" width="14" height="14" rx="1" fill="none" stroke="#2fc3a2" stroke-width="2"/><rect x="1" y="1" width="14" height="4" fill="#2fc3a2"/><path d="M2.8 9.8 C4.2 7.5 6 6.3 8 6.3 C10 6.3 11.8 7.5 13.2 9.8 C11.8 12.1 10 13.3 8 13.3 C6 13.3 4.2 12.1 2.8 9.8Z" fill="#2fc3a2"/><circle cx="8" cy="9.8" r="2.1" fill="#131313"/><circle cx="8" cy="9.8" r="1" fill="#2fc3a2"/></svg>
<div class="t" style="left:286px;top:547.90px;font-size:15px;line-height:18px;letter-spacing:0.25px;color:#ededed">Instant Access</div>
<svg class="abs" style="left:421px;top:547px" width="17" height="18" viewBox="0 0 17 18"><circle cx="8.3" cy="3.2" r="2.6" fill="#bb6bd9"/><path d="M0.8 5.6 L8.3 8.7 L15.8 5.6 V14.8 L8.3 17.8 L0.8 14.8 Z" fill="#bb6bd9"/></svg>
<div class="t" style="left:446px;top:547.90px;font-size:15px;line-height:18px;letter-spacing:0.25px;color:#ededed">Read Only</div>
<svg class="abs" style="left:557px;top:548px" width="17" height="18" viewBox="0 0 17 18"><rect x="1.3" y="2.2" width="13.6" height="13.7" rx="0.8" fill="none" stroke="#bb6bd9" stroke-width="2"/><rect x="3.85" y="4.9" width="3.2" height="3.1" fill="#bb6bd9"/><rect x="8.95" y="4.9" width="3.2" height="3.1" fill="#bb6bd9"/><rect x="3.85" y="9.9" width="3.2" height="3.1" fill="#bb6bd9"/><rect x="8.95" y="9.9" width="3.2" height="3.1" fill="#bb6bd9"/></svg>
<div class="t" style="left:581px;top:547.90px;font-size:15px;line-height:18px;letter-spacing:0.25px;color:#c477de">test tuby 9</div>
<svg class="abs" style="left:806px;top:548px" width="18" height="18" viewBox="0 0 18 18"><circle cx="9" cy="9" r="7.4" fill="none" stroke="#2fc3a2" stroke-width="1.7"/><path d="M9 4.6 A4.4 4.4 0 1 1 5.9 12.1 L9 9 Z" fill="#2fc3a2"/></svg>
<div class="t" style="left:831px;top:547.90px;font-size:15px;line-height:18px;letter-spacing:0.25px;color:#ededed">Never</div>
<svg class="abs" style="left:918px;top:548px" width="12" height="18" viewBox="0 0 12 18"><path d="M1.5 1.6 H10.5 V5.6 L7 9 L10.5 12.4 V16.4 H1.5 V12.4 L5 9 L1.5 5.6 Z" fill="none" stroke="#2fc3a2" stroke-width="1.6" stroke-linejoin="miter"/><path d="M1.5 16.4 V12.4 L6 8.6 L10.5 12.4 V16.4 Z" fill="#2fc3a2"/></svg>
<div class="t" style="left:940px;top:547.90px;font-size:15px;line-height:18px;letter-spacing:0.25px;color:#ededed">Never</div>
<div class="t" style="left:1508px;top:547.90px;font-size:15px;line-height:18px;letter-spacing:0.25px;color:#ededed">-</div>
<div class="t" style="left:1708px;top:547.90px;font-size:15px;line-height:18px;letter-spacing:0.25px;color:#ededed">-</div>
<div class="abs" style="left:80px;top:609px;width:1818px;height:2px;background:#2c2c2c"></div>
<svg class="abs" style="left:90px;top:581px" width="23" height="23" viewBox="0 0 24 24"><circle cx="12" cy="12" r="10" fill="#bb6bd9"/><circle cx="9.6" cy="8.6" r="2" fill="#131313"/><circle cx="14.9" cy="9.6" r="1.7" fill="#131313"/><path d="M4.7 13.6 C6.4 12.7 8.5 12.3 10.8 12.8 C9.8 14.5 9.6 16.6 10 19.2 C7.6 18.5 5.6 16.4 4.7 13.6Z M12.1 13.3 C14.2 12.5 17.3 12.5 19.4 13.3 C18.8 16.8 16 19.3 11.6 19.5 C11.3 17.3 11.3 15.1 12.1 13.3Z" fill="#131313"/></svg>
<div class="t" style="left:119px;top:583.90px;width:131px;overflow:hidden;font-size:15px;line-height:18px;letter-spacing:0.25px">blabla</div>
<svg class="abs" style="left:262px;top:585px" width="16" height="16" viewBox="0 0 16 16"><rect x="1" y="1" width="14" height="14" rx="1" fill="none" stroke="#2fc3a2" stroke-width="2"/><rect x="1" y="1" width="14" height="4" fill="#2fc3a2"/><path d="M2.8 9.8 C4.2 7.5 6 6.3 8 6.3 C10 6.3 11.8 7.5 13.2 9.8 C11.8 12.1 10 13.3 8 13.3 C6 13.3 4.2 12.1 2.8 9.8Z" fill="#2fc3a2"/><circle cx="8" cy="9.8" r="2.1" fill="#131313"/><circle cx="8" cy="9.8" r="1" fill="#2fc3a2"/></svg>
<div class="t" style="left:286px;top:583.90px;font-size:15px;line-height:18px;letter-spacing:0.25px;color:#ededed">Instant Access</div>
<svg class="abs" style="left:421px;top:583px" width="17" height="18" viewBox="0 0 17 18"><circle cx="8.3" cy="3.2" r="2.6" fill="#bb6bd9"/><path d="M0.8 5.6 L8.3 8.7 L15.8 5.6 V14.8 L8.3 17.8 L0.8 14.8 Z" fill="#bb6bd9"/></svg>
<div class="t" style="left:446px;top:583.90px;font-size:15px;line-height:18px;letter-spacing:0.25px;color:#ededed">Read Only</div>
<svg class="abs" style="left:557px;top:584px" width="17" height="18" viewBox="0 0 17 18"><rect x="1.3" y="2.2" width="13.6" height="13.7" rx="0.8" fill="none" stroke="#bb6bd9" stroke-width="2"/><rect x="3.85" y="4.9" width="3.2" height="3.1" fill="#bb6bd9"/><rect x="8.95" y="4.9" width="3.2" height="3.1" fill="#bb6bd9"/><rect x="3.85" y="9.9" width="3.2" height="3.1" fill="#bb6bd9"/><rect x="8.95" y="9.9" width="3.2" height="3.1" fill="#bb6bd9"/></svg>
<div class="t" style="left:581px;top:583.90px;font-size:15px;line-height:18px;letter-spacing:0.25px;color:#c477de">test tuby 9</div>
<svg class="abs" style="left:806px;top:584px" width="18" height="18" viewBox="0 0 18 18"><circle cx="9" cy="9" r="7.4" fill="none" stroke="#2fc3a2" stroke-width="1.7"/><path d="M9 4.6 A4.4 4.4 0 1 1 5.9 12.1 L9 9 Z" fill="#2fc3a2"/></svg>
<div class="t" style="left:831px;top:583.90px;font-size:15px;line-height:18px;letter-spacing:0.25px;color:#ededed">Never</div>
<svg class="abs" style="left:918px;top:584px" width="12" height="18" viewBox="0 0 12 18"><path d="M1.5 1.6 H10.5 V5.6 L7 9 L10.5 12.4 V16.4 H1.5 V12.4 L5 9 L1.5 5.6 Z" fill="none" stroke="#2fc3a2" stroke-width="1.6" stroke-linejoin="miter"/><path d="M1.5 16.4 V12.4 L6 8.6 L10.5 12.4 V16.4 Z" fill="#2fc3a2"/></svg>
<div class="t" style="left:940px;top:583.90px;font-size:15px;line-height:18px;letter-spacing:0.25px;color:#ededed">Never</div>
<svg class="abs" style="left:1116px;top:583px" width="17" height="19" viewBox="0 0 17 19"><path fill="#bb6bd9" d="M8.5 0.8 L16 3.8 V9 C16 13.6 12.9 17.3 8.5 18.5 C4.1 17.3 1 13.6 1 9 V3.8 Z"/><circle cx="8.2" cy="9" r="2.9" fill="none" stroke="#131313" stroke-width="1.9"/><path d="M10.3 11.1 L13 13.8" stroke="#131313" stroke-width="1.9" stroke-linecap="round"/></svg>
<div class="t" style="left:1140px;top:583.90px;font-size:15px;line-height:18px;letter-spacing:0.25px;color:#ededed">2 Security Policies</div>
<svg class="abs" style="left:1275px;top:588px" width="14" height="10" viewBox="0 0 14 10"><path d="M2 2.2 L7 7.2 L12 2.2" fill="none" stroke="#fff" stroke-width="2"/></svg>
<div class="t" style="left:1508px;top:583.90px;font-size:15px;line-height:18px;letter-spacing:0.25px;color:#ededed">-</div>
<div class="t" style="left:1708px;top:583.90px;font-size:15px;line-height:18px;letter-spacing:0.25px;color:#ededed">-</div>
<div class="abs" style="left:80px;top:645px;width:1818px;height:2px;background:#2c2c2c"></div>
<svg class="abs" style="left:90px;top:617px" width="23" height="23" viewBox="0 0 24 24"><path fill="#bb6bd9" d="M5 4.5 h2.2 v-2 h1.6 v2 h6.4 v-2 h1.6 v2 H19 a1.5 1.5 0 0 1 1.5 1.5 V20 a1.5 1.5 0 0 1-1.5 1.5 H5 A1.5 1.5 0 0 1 3.5 20 V6 A1.5 1.5 0 0 1 5 4.5Z"/><circle cx="12" cy="9.8" r="3" fill="#131313"/><path d="M6.3 17.8 C7.1 15.5 9.5 14.3 12 14.3 C14.5 14.3 16.9 15.5 17.7 17.8 Z" fill="#131313"/></svg>
<div class="t" style="left:119px;top:619.90px;width:131px;overflow:hidden;font-size:15px;line-height:18px;letter-spacing:0.25px">Data Analysts Group</div>
<svg class="abs" style="left:262px;top:621px" width="16" height="16" viewBox="0 0 16 16"><rect x="1" y="1" width="14" height="14" rx="1" fill="none" stroke="#2fc3a2" stroke-width="2"/><rect x="1" y="1" width="14" height="4" fill="#2fc3a2"/><path d="M2.8 9.8 C4.2 7.5 6 6.3 8 6.3 C10 6.3 11.8 7.5 13.2 9.8 C11.8 12.1 10 13.3 8 13.3 C6 13.3 4.2 12.1 2.8 9.8Z" fill="#2fc3a2"/><circle cx="8" cy="9.8" r="2.1" fill="#131313"/><circle cx="8" cy="9.8" r="1" fill="#2fc3a2"/></svg>
<div class="t" style="left:286px;top:619.90px;font-size:15px;line-height:18px;letter-spacing:0.25px;color:#ededed">Instant Access</div>
<svg class="abs" style="left:421px;top:619px" width="17" height="18" viewBox="0 0 17 18"><circle cx="8.3" cy="3.2" r="2.6" fill="#bb6bd9"/><path d="M0.8 5.6 L8.3 8.7 L15.8 5.6 V14.8 L8.3 17.8 L0.8 14.8 Z" fill="#bb6bd9"/></svg>
<div class="t" style="left:446px;top:619.90px;font-size:15px;line-height:18px;letter-spacing:0.25px;color:#ededed">Read Only</div>
<svg class="abs" style="left:557px;top:620px" width="17" height="18" viewBox="0 0 17 18"><rect x="1.3" y="2.2" width="13.6" height="13.7" rx="0.8" fill="none" stroke="#bb6bd9" stroke-width="2"/><rect x="3.85" y="4.9" width="3.2" height="3.1" fill="#bb6bd9"/><rect x="8.95" y="4.9" width="3.2" height="3.1" fill="#bb6bd9"/><rect x="3.85" y="9.9" width="3.2" height="3.1" fill="#bb6bd9"/><rect x="8.95" y="9.9" width="3.2" height="3.1" fill="#bb6bd9"/></svg>
<div class="t" style="left:581px;top:619.90px;font-size:15px;line-height:18px;letter-spacing:0.25px;color:#c477de">Customer Data (ACME)</div>
<svg class="abs" style="left:806px;top:620px" width="18" height="18" viewBox="0 0 18 18"><circle cx="9" cy="9" r="7.4" fill="none" stroke="#2fc3a2" stroke-width="1.7"/><path d="M9 4.6 A4.4 4.4 0 1 1 5.9 12.1 L9 9 Z" fill="#2fc3a2"/></svg>
<div class="t" style="left:831px;top:619.90px;font-size:15px;line-height:18px;letter-spacing:0.25px;color:#ededed">Never</div>
<svg class="abs" style="left:918px;top:620px" width="12" height="18" viewBox="0 0 12 18"><path d="M1.5 1.6 H10.5 V5.6 L7 9 L10.5 12.4 V16.4 H1.5 V12.4 L5 9 L1.5 5.6 Z" fill="none" stroke="#2fc3a2" stroke-width="1.6" stroke-linejoin="miter"/><path d="M1.5 16.4 V12.4 L6 8.6 L10.5 12.4 V16.4 Z" fill="#2fc3a2"/></svg>
<div class="t" style="left:940px;top:619.90px;font-size:15px;line-height:18px;letter-spacing:0.25px;color:#ededed">Never</div>
<svg class="abs" style="left:1116px;top:619px" width="17" height="19" viewBox="0 0 17 19"><path fill="#bb6bd9" d="M8.5 0.8 L16 3.8 V9 C16 13.6 12.9 17.3 8.5 18.5 C4.1 17.3 1 13.6 1 9 V3.8 Z"/><circle cx="8.2" cy="9" r="2.9" fill="none" stroke="#131313" stroke-width="1.9"/><path d="M10.3 11.1 L13 13.8" stroke="#131313" stroke-width="1.9" stroke-linecap="round"/></svg>
<div class="t" style="left:1140px;top:619.90px;font-size:15px;line-height:18px;letter-spacing:0.25px;color:#c477de">Customer Data (Protected Data)</div>
<div class="t" style="left:1508px;top:619.90px;font-size:15px;line-height:18px;letter-spacing:0.25px;color:#ededed">-</div>
<div class="t" style="left:1708px;top:619.90px;font-size:15px;line-height:18px;letter-spacing:0.25px;color:#ededed">-</div>
<div class="abs" style="left:80px;top:681px;width:1818px;height:2px;background:#2c2c2c"></div>
<svg class="abs" style="left:90px;top:653px" width="23" height="23" viewBox="0 0 24 24"><path fill="#bb6bd9" d="M3.8 3.8h4.5L3.8 8.3zM20.2 3.8h-4.5l4.5 4.5zM3.8 20.2h4.5L3.8 15.7zM20.2 20.2h-4.5l4.5-4.5z"/><circle cx="12" cy="12" r="6.4" fill="none" stroke="#bb6bd9" stroke-width="2"/></svg>
<div class="t" style="left:119px;top:655.90px;width:131px;overflow:hidden;font-size:15px;line-height:18px;letter-spacing:0.25px">Everyone</div>
<svg class="abs" style="left:262px;top:657px" width="16" height="16" viewBox="0 0 16 16"><rect x="1" y="1" width="14" height="14" rx="1" fill="none" stroke="#2fc3a2" stroke-width="2"/><rect x="1" y="1" width="14" height="4" fill="#2fc3a2"/><path d="M2.8 9.8 C4.2 7.5 6 6.3 8 6.3 C10 6.3 11.8 7.5 13.2 9.8 C11.8 12.1 10 13.3 8 13.3 C6 13.3 4.2 12.1 2.8 9.8Z" fill="#2fc3a2"/><circle cx="8" cy="9.8" r="2.1" fill="#131313"/><circle cx="8" cy="9.8" r="1" fill="#2fc3a2"/></svg>
<div class="t" style="left:286px;top:655.90px;font-size:15px;line-height:18px;letter-spacing:0.25px;color:#ededed">Instant Access</div>
<svg class="abs" style="left:421px;top:655px" width="17" height="18" viewBox="0 0 17 18"><circle cx="8.3" cy="3.2" r="2.6" fill="#bb6bd9"/><path d="M0.8 5.6 L8.3 8.7 L15.8 5.6 V14.8 L8.3 17.8 L0.8 14.8 Z" fill="#bb6bd9"/></svg>
<div class="t" style="left:446px;top:655.90px;font-size:15px;line-height:18px;letter-spacing:0.25px;color:#ededed">Read Only</div>
<svg class="abs" style="left:557px;top:656px" width="17" height="18" viewBox="0 0 17 18"><rect x="1.3" y="2.2" width="13.6" height="13.7" rx="0.8" fill="none" stroke="#bb6bd9" stroke-width="2"/><rect x="3.85" y="4.9" width="3.2" height="3.1" fill="#bb6bd9"/><rect x="8.95" y="4.9" width="3.2" height="3.1" fill="#bb6bd9"/><rect x="3.85" y="9.9" width="3.2" height="3.1" fill="#bb6bd9"/><rect x="8.95" y="9.9" width="3.2" height="3.1" fill="#bb6bd9"/></svg>
<div class="t" style="left:581px;top:655.90px;font-size:15px;line-height:18px;letter-spacing:0.25px;color:#c477de">avihai test 1</div>
<svg class="abs" style="left:806px;top:656px" width="18" height="18" viewBox="0 0 18 18"><circle cx="9" cy="9" r="7.4" fill="none" stroke="#2fc3a2" stroke-width="1.7"/><path d="M9 4.6 A4.4 4.4 0 1 1 5.9 12.1 L9 9 Z" fill="#2fc3a2"/></svg>
<div class="t" style="left:831px;top:655.90px;font-size:15px;line-height:18px;letter-spacing:0.25px;color:#ededed">Never</div>
<svg class="abs" style="left:918px;top:656px" width="12" height="18" viewBox="0 0 12 18"><path d="M1.5 1.6 H10.5 V5.6 L7 9 L10.5 12.4 V16.4 H1.5 V12.4 L5 9 L1.5 5.6 Z" fill="none" stroke="#2fc3a2" stroke-width="1.6" stroke-linejoin="miter"/><path d="M1.5 16.4 V12.4 L6 8.6 L10.5 12.4 V16.4 Z" fill="#2fc3a2"/></svg>
<div class="t" style="left:940px;top:655.90px;font-size:15px;line-height:18px;letter-spacing:0.25px;color:#ededed">Never</div>
<svg class="abs" style="left:1116px;top:655px" width="17" height="19" viewBox="0 0 17 19"><path fill="#bb6bd9" d="M8.5 0.8 L16 3.8 V9 C16 13.6 12.9 17.3 8.5 18.5 C4.1 17.3 1 13.6 1 9 V3.8 Z"/><circle cx="8.2" cy="9" r="2.9" fill="none" stroke="#131313" stroke-width="1.9"/><path d="M10.3 11.1 L13 13.8" stroke="#131313" stroke-width="1.9" stroke-linecap="round"/></svg>
<div class="t" style="left:1140px;top:655.90px;font-size:15px;line-height:18px;letter-spacing:0.25px;color:#c477de">ACME Country Code Security Policy</div>
<div class="t" style="left:1508px;top:655.90px;font-size:15px;line-height:18px;letter-spacing:0.25px;color:#ededed">-</div>
<div class="t" style="left:1708px;top:655.90px;font-size:15px;line-height:18px;letter-spacing:0.25px;color:#ededed">-</div>
<div class="abs" style="left:80px;top:717px;width:1818px;height:2px;background:#2c2c2c"></div>
<svg class="abs" style="left:90px;top:689px" width="23" height="23" viewBox="0 0 24 24"><path fill="#bb6bd9" d="M3.8 3.8h4.5L3.8 8.3zM20.2 3.8h-4.5l4.5 4.5zM3.8 20.2h4.5L3.8 15.7zM20.2 20.2h-4.5l4.5-4.5z"/><circle cx="12" cy="12" r="6.4" fill="none" stroke="#bb6bd9" stroke-width="2"/></svg>
<div class="t" style="left:119px;top:691.90px;width:131px;overflow:hidden;font-size:15px;line-height:18px;letter-spacing:0.25px">Everyone</div>
<svg class="abs" style="left:262px;top:693px" width="16" height="16" viewBox="0 0 16 16"><rect x="1" y="1" width="14" height="14" rx="1" fill="none" stroke="#5bc2f3" stroke-width="2"/><rect x="1" y="1" width="14" height="4" fill="#5bc2f3"/><path d="M2.8 9.8 C4.2 7.5 6 6.3 8 6.3 C10 6.3 11.8 7.5 13.2 9.8 C11.8 12.1 10 13.3 8 13.3 C6 13.3 4.2 12.1 2.8 9.8Z" fill="#5bc2f3"/><circle cx="8" cy="9.8" r="2.1" fill="#131313"/><circle cx="8" cy="9.8" r="1" fill="#5bc2f3"/></svg>
<div class="t" style="left:286px;top:691.90px;font-size:15px;line-height:18px;letter-spacing:0.25px;color:#ededed">Access Request</div>
<svg class="abs" style="left:421px;top:691px" width="17" height="18" viewBox="0 0 17 18"><path d="M12.7 7.7 V4.9 A3.6 3.6 0 0 0 5.5 4.9" fill="none" stroke="#bb6bd9" stroke-width="1.7" stroke-linecap="round"/><rect x="3" y="7.7" width="11.9" height="9.6" rx="0.9" fill="none" stroke="#bb6bd9" stroke-width="1.7"/><circle cx="9" cy="12.5" r="1.3" fill="#bb6bd9"/></svg>
<div class="t" style="left:446px;top:691.90px;font-size:15px;line-height:18px;letter-spacing:0.25px;color:#ededed">Full Access</div>
<svg class="abs" style="left:557px;top:692px" width="17" height="18" viewBox="0 0 17 18"><rect x="1.3" y="2.2" width="13.6" height="13.7" rx="0.8" fill="none" stroke="#bb6bd9" stroke-width="2"/><rect x="3.85" y="4.9" width="3.2" height="3.1" fill="#bb6bd9"/><rect x="8.95" y="4.9" width="3.2" height="3.1" fill="#bb6bd9"/><rect x="3.85" y="9.9" width="3.2" height="3.1" fill="#bb6bd9"/><rect x="8.95" y="9.9" width="3.2" height="3.1" fill="#bb6bd9"/></svg>
<div class="t" style="left:581px;top:691.90px;font-size:15px;line-height:18px;letter-spacing:0.25px;color:#c477de">Loren dataset</div>
<svg class="abs" style="left:806px;top:692px" width="18" height="18" viewBox="0 0 18 18"><circle cx="9" cy="9" r="7.4" fill="none" stroke="#2fc3a2" stroke-width="1.7"/><path d="M9 4.6 A4.4 4.4 0 1 1 5.9 12.1 L9 9 Z" fill="#2fc3a2"/></svg>
<div class="t" style="left:831px;top:691.90px;font-size:15px;line-height:18px;letter-spacing:0.25px;color:#ededed">Never</div>
<svg class="abs" style="left:918px;top:692px" width="12" height="18" viewBox="0 0 12 18"><path d="M1.5 1.6 H10.5 V5.6 L7 9 L10.5 12.4 V16.4 H1.5 V12.4 L5 9 L1.5 5.6 Z" fill="none" stroke="#2fc3a2" stroke-width="1.6" stroke-linejoin="miter"/><path d="M1.5 16.4 V12.4 L6 8.6 L10.5 12.4 V16.4 Z" fill="#2fc3a2"/></svg>
<div class="t" style="left:940px;top:691.90px;font-size:15px;line-height:18px;letter-spacing:0.25px;color:#ededed">Never</div>
<div class="t" style="left:1508px;top:691.90px;font-size:15px;line-height:18px;letter-spacing:0.25px;color:#ededed">Default Approvers</div>
<div class="t" style="left:1708px;top:691.90px;font-size:15px;line-height:18px;letter-spacing:0.25px;color:#ededed">No</div>
<div class="abs" style="left:80px;top:753px;width:1818px;height:2px;background:#2c2c2c"></div>
<svg class="abs" style="left:90px;top:725px" width="23" height="23" viewBox="0 0 24 24"><circle cx="12" cy="12" r="10" fill="#bb6bd9"/><circle cx="9.6" cy="8.6" r="2" fill="#131313"/><circle cx="14.9" cy="9.6" r="1.7" fill="#131313"/><path d="M4.7 13.6 C6.4 12.7 8.5 12.3 10.8 12.8 C9.8 14.5 9.6 16.6 10 19.2 C7.6 18.5 5.6 16.4 4.7 13.6Z M12.1 13.3 C14.2 12.5 17.3 12.5 19.4 13.3 C18.8 16.8 16 19.3 11.6 19.5 C11.3 17.3 11.3 15.1 12.1 13.3Z" fill="#131313"/></svg>
<div class="t" style="left:119px;top:727.90px;width:131px;overflow:hidden;font-size:15px;line-height:18px;letter-spacing:0.25px">sadasd</div>
<svg class="abs" style="left:262px;top:729px" width="16" height="16" viewBox="0 0 16 16"><rect x="1" y="1" width="14" height="14" rx="1" fill="none" stroke="#5bc2f3" stroke-width="2"/><rect x="1" y="1" width="14" height="4" fill="#5bc2f3"/><path d="M2.8 9.8 C4.2 7.5 6 6.3 8 6.3 C10 6.3 11.8 7.5 13.2 9.8 C11.8 12.1 10 13.3 8 13.3 C6 13.3 4.2 12.1 2.8 9.8Z" fill="#5bc2f3"/><circle cx="8" cy="9.8" r="2.1" fill="#131313"/><circle cx="8" cy="9.8" r="1" fill="#5bc2f3"/></svg>
<div class="t" style="left:286px;top:727.90px;font-size:15px;line-height:18px;letter-spacing:0.25px;color:#ededed">Access Request</div>
<svg class="abs" style="left:421px;top:727px" width="17" height="18" viewBox="0 0 17 18"><circle cx="8.3" cy="3.2" r="2.6" fill="#bb6bd9"/><path d="M0.8 5.6 L8.3 8.7 L15.8 5.6 V14.8 L8.3 17.8 L0.8 14.8 Z" fill="#bb6bd9"/></svg>
<div class="t" style="left:446px;top:727.90px;font-size:15px;line-height:18px;letter-spacing:0.25px;color:#ededed">Read Only</div>
<svg class="abs" style="left:557px;top:728px" width="17" height="18" viewBox="0 0 17 18"><rect x="1.3" y="2.2" width="13.6" height="13.7" rx="0.8" fill="none" stroke="#bb6bd9" stroke-width="2"/><rect x="3.85" y="4.9" width="3.2" height="3.1" fill="#bb6bd9"/><rect x="8.95" y="4.9" width="3.2" height="3.1" fill="#bb6bd9"/><rect x="3.85" y="9.9" width="3.2" height="3.1" fill="#bb6bd9"/><rect x="8.95" y="9.9" width="3.2" height="3.1" fill="#bb6bd9"/></svg>
<div class="t" style="left:581px;top:727.90px;font-size:15px;line-height:18px;letter-spacing:0.25px;color:#c477de">Loren dataset</div>
<svg class="abs" style="left:806px;top:728px" width="18" height="18" viewBox="0 0 18 18"><circle cx="9" cy="9" r="7.4" fill="none" stroke="#2fc3a2" stroke-width="1.7"/><path d="M9 4.6 A4.4 4.4 0 1 1 5.9 12.1 L9 9 Z" fill="#2fc3a2"/></svg>
<div class="t" style="left:831px;top:727.90px;font-size:15px;line-height:18px;letter-spacing:0.25px;color:#ededed">Never</div>
<svg class="abs" style="left:918px;top:728px" width="12" height="18" viewBox="0 0 12 18"><path d="M1.5 1.6 H10.5 V5.6 L7 9 L10.5 12.4 V16.4 H1.5 V12.4 L5 9 L1.5 5.6 Z" fill="none" stroke="#2fc3a2" stroke-width="1.6" stroke-linejoin="miter"/><path d="M1.5 16.4 V12.4 L6 8.6 L10.5 12.4 V16.4 Z" fill="#2fc3a2"/></svg>
<div class="t" style="left:940px;top:727.90px;font-size:15px;line-height:18px;letter-spacing:0.25px;color:#ededed">Never</div>
<div class="t" style="left:1508px;top:727.90px;font-size:15px;line-height:18px;letter-spacing:0.25px;color:#ededed">Default Approvers</div>
<div class="t" style="left:1708px;top:727.90px;font-size:15px;line-height:18px;letter-spacing:0.25px;color:#ededed">No</div>
<div class="abs" style="left:80px;top:789px;width:1818px;height:2px;background:#2c2c2c"></div>
<svg class="abs" style="left:90px;top:761px" width="23" height="23" viewBox="0 0 24 24"><path fill="#bb6bd9" d="M5 4.5 h2.2 v-2 h1.6 v2 h6.4 v-2 h1.6 v2 H19 a1.5 1.5 0 0 1 1.5 1.5 V20 a1.5 1.5 0 0 1-1.5 1.5 H5 A1.5 1.5 0 0 1 3.5 20 V6 A1.5 1.5 0 0 1 5 4.5Z"/><circle cx="12" cy="9.8" r="3" fill="#131313"/><path d="M6.3 17.8 C7.1 15.5 9.5 14.3 12 14.3 C14.5 14.3 16.9 15.5 17.7 17.8 Z" fill="#131313"/></svg>
<div class="t" style="left:119px;top:763.90px;width:131px;overflow:hidden;font-size:15px;line-height:18px;letter-spacing:0.25px">ACME (Managers)</div>
<svg class="abs" style="left:262px;top:765px" width="16" height="16" viewBox="0 0 16 16"><rect x="1" y="1" width="14" height="14" rx="1" fill="none" stroke="#5bc2f3" stroke-width="2"/><rect x="1" y="1" width="14" height="4" fill="#5bc2f3"/><path d="M2.8 9.8 C4.2 7.5 6 6.3 8 6.3 C10 6.3 11.8 7.5 13.2 9.8 C11.8 12.1 10 13.3 8 13.3 C6 13.3 4.2 12.1 2.8 9.8Z" fill="#5bc2f3"/><circle cx="8" cy="9.8" r="2.1" fill="#131313"/><circle cx="8" cy="9.8" r="1" fill="#5bc2f3"/></svg>
<div class="t" style="left:286px;top:763.90px;font-size:15px;line-height:18px;letter-spacing:0.25px;color:#ededed">Access Request</div>
<svg class="abs" style="left:421px;top:763px" width="19" height="21" viewBox="0 0 19 21"><rect x="1.1" y="4" width="15.8" height="16" rx="1.2" fill="#bb6bd9"/><path d="M7.6 13.7 L16.8 4.7" stroke="#131313" stroke-width="6.8" stroke-linecap="round"/><path d="M7.6 13.7 L13.2 8.3" stroke="#bb6bd9" stroke-width="4.4" stroke-linecap="round"/><path d="M14.7 6.8 L16.9 4.6" stroke="#bb6bd9" stroke-width="4.4"/></svg>
<div class="t" style="left:446px;top:763.90px;font-size:15px;line-height:18px;letter-spacing:0.25px;color:#ededed">Read &amp; Write</div>
<svg class="abs" style="left:557px;top:764px" width="17" height="18" viewBox="0 0 17 18"><rect x="1.3" y="2.2" width="13.6" height="13.7" rx="0.8" fill="none" stroke="#bb6bd9" stroke-width="2"/><rect x="3.85" y="4.9" width="3.2" height="3.1" fill="#bb6bd9"/><rect x="8.95" y="4.9" width="3.2" height="3.1" fill="#bb6bd9"/><rect x="3.85" y="9.9" width="3.2" height="3.1" fill="#bb6bd9"/><rect x="8.95" y="9.9" width="3.2" height="3.1" fill="#bb6bd9"/></svg>
<div class="t" style="left:581px;top:763.90px;font-size:15px;line-height:18px;letter-spacing:0.25px;color:#c477de">Loren dataset</div>
<svg class="abs" style="left:806px;top:764px" width="18" height="18" viewBox="0 0 18 18"><circle cx="9" cy="9" r="7.4" fill="none" stroke="#2fc3a2" stroke-width="1.7"/><path d="M9 4.6 A4.4 4.4 0 1 1 5.9 12.1 L9 9 Z" fill="#2fc3a2"/></svg>
<div class="t" style="left:831px;top:763.90px;font-size:15px;line-height:18px;letter-spacing:0.25px;color:#ededed">Never</div>
<svg class="abs" style="left:918px;top:764px" width="12" height="18" viewBox="0 0 12 18"><path d="M1.5 1.6 H10.5 V5.6 L7 9 L10.5 12.4 V16.4 H1.5 V12.4 L5 9 L1.5 5.6 Z" fill="none" stroke="#2fc3a2" stroke-width="1.6" stroke-linejoin="miter"/><path d="M1.5 16.4 V12.4 L6 8.6 L10.5 12.4 V16.4 Z" fill="#2fc3a2"/></svg>
<div class="t" style="left:940px;top:763.90px;font-size:15px;line-height:18px;letter-spacing:0.25px;color:#ededed">Never</div>
<div class="t" style="left:1508px;top:763.90px;font-size:15px;line-height:18px;letter-spacing:0.25px;color:#ededed">Default Approvers</div>
<div class="t" style="left:1708px;top:763.90px;font-size:15px;line-height:18px;letter-spacing:0.25px;color:#ededed">No</div>
<div class="abs" style="left:80px;top:825px;width:1818px;height:2px;background:#2c2c2c"></div>
<svg class="abs" style="left:90px;top:797px" width="23" height="23" viewBox="0 0 24 24"><circle cx="12" cy="12" r="10" fill="#bb6bd9"/><circle cx="9.6" cy="8.6" r="2" fill="#131313"/><circle cx="14.9" cy="9.6" r="1.7" fill="#131313"/><path d="M4.7 13.6 C6.4 12.7 8.5 12.3 10.8 12.8 C9.8 14.5 9.6 16.6 10 19.2 C7.6 18.5 5.6 16.4 4.7 13.6Z M12.1 13.3 C14.2 12.5 17.3 12.5 19.4 13.3 C18.8 16.8 16 19.3 11.6 19.5 C11.3 17.3 11.3 15.1 12.1 13.3Z" fill="#131313"/></svg>
<div class="t" style="left:119px;top:799.90px;width:131px;overflow:hidden;font-size:15px;line-height:18px;letter-spacing:0.25px">HELLO</div>
<svg class="abs" style="left:262px;top:801px" width="16" height="16" viewBox="0 0 16 16"><rect x="1" y="1" width="14" height="14" rx="1" fill="none" stroke="#2fc3a2" stroke-width="2"/><rect x="1" y="1" width="14" height="4" fill="#2fc3a2"/><path d="M2.8 9.8 C4.2 7.5 6 6.3 8 6.3 C10 6.3 11.8 7.5 13.2 9.8 C11.8 12.1 10 13.3 8 13.3 C6 13.3 4.2 12.1 2.8 9.8Z" fill="#2fc3a2"/><circle cx="8" cy="9.8" r="2.1" fill="#131313"/><circle cx="8" cy="9.8" r="1" fill="#2fc3a2"/></svg>
<div class="t" style="left:286px;top:799.90px;font-size:15px;line-height:18px;letter-spacing:0.25px;color:#ededed">Instant Access</div>
<svg class="abs" style="left:421px;top:799px" width="17" height="18" viewBox="0 0 17 18"><circle cx="8.3" cy="3.2" r="2.6" fill="#bb6bd9"/><path d="M0.8 5.6 L8.3 8.7 L15.8 5.6 V14.8 L8.3 17.8 L0.8 14.8 Z" fill="#bb6bd9"/></svg>
<div class="t" style="left:446px;top:799.90px;font-size:15px;line-height:18px;letter-spacing:0.25px;color:#ededed">Read Only</div>
<svg class="abs" style="left:557px;top:800px" width="17" height="18" viewBox="0 0 17 18"><rect x="1.3" y="2.2" width="13.6" height="13.7" rx="0.8" fill="none" stroke="#bb6bd9" stroke-width="2"/><rect x="3.85" y="4.9" width="3.2" height="3.1" fill="#bb6bd9"/><rect x="8.95" y="4.9" width="3.2" height="3.1" fill="#bb6bd9"/><rect x="3.85" y="9.9" width="3.2" height="3.1" fill="#bb6bd9"/><rect x="8.95" y="9.9" width="3.2" height="3.1" fill="#bb6bd9"/></svg>
<div class="t" style="left:581px;top:799.90px;font-size:15px;line-height:18px;letter-spacing:0.25px;color:#c477de">test tuby 9</div>
<svg class="abs" style="left:806px;top:800px" width="18" height="18" viewBox="0 0 18 18"><circle cx="9" cy="9" r="7.4" fill="none" stroke="#2fc3a2" stroke-width="1.7"/><path d="M9 4.6 A4.4 4.4 0 1 1 5.9 12.1 L9 9 Z" fill="#2fc3a2"/></svg>
<div class="t" style="left:831px;top:799.90px;font-size:15px;line-height:18px;letter-spacing:0.25px;color:#ededed">Never</div>
<svg class="abs" style="left:918px;top:800px" width="12" height="18" viewBox="0 0 12 18"><path d="M1.5 1.6 H10.5 V5.6 L7 9 L10.5 12.4 V16.4 H1.5 V12.4 L5 9 L1.5 5.6 Z" fill="none" stroke="#2fc3a2" stroke-width="1.6" stroke-linejoin="miter"/><path d="M1.5 16.4 V12.4 L6 8.6 L10.5 12.4 V16.4 Z" fill="#2fc3a2"/></svg>
<div class="t" style="left:940px;top:799.90px;font-size:15px;line-height:18px;letter-spacing:0.25px;color:#ededed">Never</div>
<div class="t" style="left:1508px;top:799.90px;font-size:15px;line-height:18px;letter-spacing:0.25px;color:#ededed">-</div>
<div class="t" style="left:1708px;top:799.90px;font-size:15px;line-height:18px;letter-spacing:0.25px;color:#ededed">-</div>
<div class="abs" style="left:80px;top:861px;width:1818px;height:2px;background:#2c2c2c"></div>
<svg class="abs" style="left:90px;top:833px" width="23" height="23" viewBox="0 0 24 24"><path fill="#bb6bd9" d="M3.8 3.8h4.5L3.8 8.3zM20.2 3.8h-4.5l4.5 4.5zM3.8 20.2h4.5L3.8 15.7zM20.2 20.2h-4.5l4.5-4.5z"/><circle cx="12" cy="12" r="6.4" fill="none" stroke="#bb6bd9" stroke-width="2"/></svg>
<div class="t" style="left:119px;top:835.90px;width:131px;overflow:hidden;font-size:15px;line-height:18px;letter-spacing:0.25px">Everyone</div>
<svg class="abs" style="left:262px;top:837px" width="16" height="16" viewBox="0 0 16 16"><rect x="1" y="1" width="14" height="14" rx="1" fill="none" stroke="#2fc3a2" stroke-width="2"/><rect x="1" y="1" width="14" height="4" fill="#2fc3a2"/><path d="M2.8 9.8 C4.2 7.5 6 6.3 8 6.3 C10 6.3 11.8 7.5 13.2 9.8 C11.8 12.1 10 13.3 8 13.3 C6 13.3 4.2 12.1 2.8 9.8Z" fill="#2fc3a2"/><circle cx="8" cy="9.8" r="2.1" fill="#131313"/><circle cx="8" cy="9.8" r="1" fill="#2fc3a2"/></svg>
<div class="t" style="left:286px;top:835.90px;font-size:15px;line-height:18px;letter-spacing:0.25px;color:#ededed">Instant Access</div>
<svg class="abs" style="left:421px;top:834px" width="17" height="18" viewBox="0 0 17 18"><rect x="3" y="5.5" width="3.2" height="11.5" fill="#bb6bd9"/><rect x="10" y="5.5" width="3.2" height="11.5" fill="#bb6bd9"/></svg>
<div class="t" style="left:446px;top:835.90px;font-size:15px;line-height:18px;letter-spacing:0.25px;color:#ededed">Suspended</div>
<svg class="abs" style="left:557px;top:836px" width="17" height="18" viewBox="0 0 17 18"><rect x="1.3" y="2.2" width="13.6" height="13.7" rx="0.8" fill="none" stroke="#bb6bd9" stroke-width="2"/><rect x="3.85" y="4.9" width="3.2" height="3.1" fill="#bb6bd9"/><rect x="8.95" y="4.9" width="3.2" height="3.1" fill="#bb6bd9"/><rect x="3.85" y="9.9" width="3.2" height="3.1" fill="#bb6bd9"/><rect x="8.95" y="9.9" width="3.2" height="3.1" fill="#bb6bd9"/></svg>
<div class="t" style="left:581px;top:835.90px;font-size:15px;line-height:18px;letter-spacing:0.25px;color:#c477de">tuby test 5</div>
<svg class="abs" style="left:806px;top:836px" width="18" height="18" viewBox="0 0 18 18"><circle cx="9" cy="9" r="7.4" fill="none" stroke="#2fc3a2" stroke-width="1.7"/><path d="M9 4.6 A4.4 4.4 0 1 1 5.9 12.1 L9 9 Z" fill="#2fc3a2"/></svg>
<div class="t" style="left:831px;top:835.90px;font-size:15px;line-height:18px;letter-spacing:0.25px;color:#ededed">Never</div>
<svg class="abs" style="left:918px;top:836px" width="12" height="18" viewBox="0 0 12 18"><path d="M1.5 1.6 H10.5 V5.6 L7 9 L10.5 12.4 V16.4 H1.5 V12.4 L5 9 L1.5 5.6 Z" fill="none" stroke="#2fc3a2" stroke-width="1.6" stroke-linejoin="miter"/><path d="M1.5 16.4 V12.4 L6 8.6 L10.5 12.4 V16.4 Z" fill="#2fc3a2"/></svg>
<div class="t" style="left:940px;top:835.90px;font-size:15px;line-height:18px;letter-spacing:0.25px;color:#ededed">Never</div>
<div class="t" style="left:1508px;top:835.90px;font-size:15px;line-height:18px;letter-spacing:0.25px;color:#ededed">-</div>
<div class="t" style="left:1708px;top:835.90px;font-size:15px;line-height:18px;letter-spacing:0.25px;color:#ededed">-</div>
<div class="abs" style="left:80px;top:869px;width:1818px;height:1px;background:#2c2c2c"></div>
<div class="t" style="left:1737px;top:879.30px;font-size:15px;line-height:18px;letter-spacing:0.43px;color:#ededed;left:auto;right:36px">Total Rows: 50 of 66</div>
</body></html>
